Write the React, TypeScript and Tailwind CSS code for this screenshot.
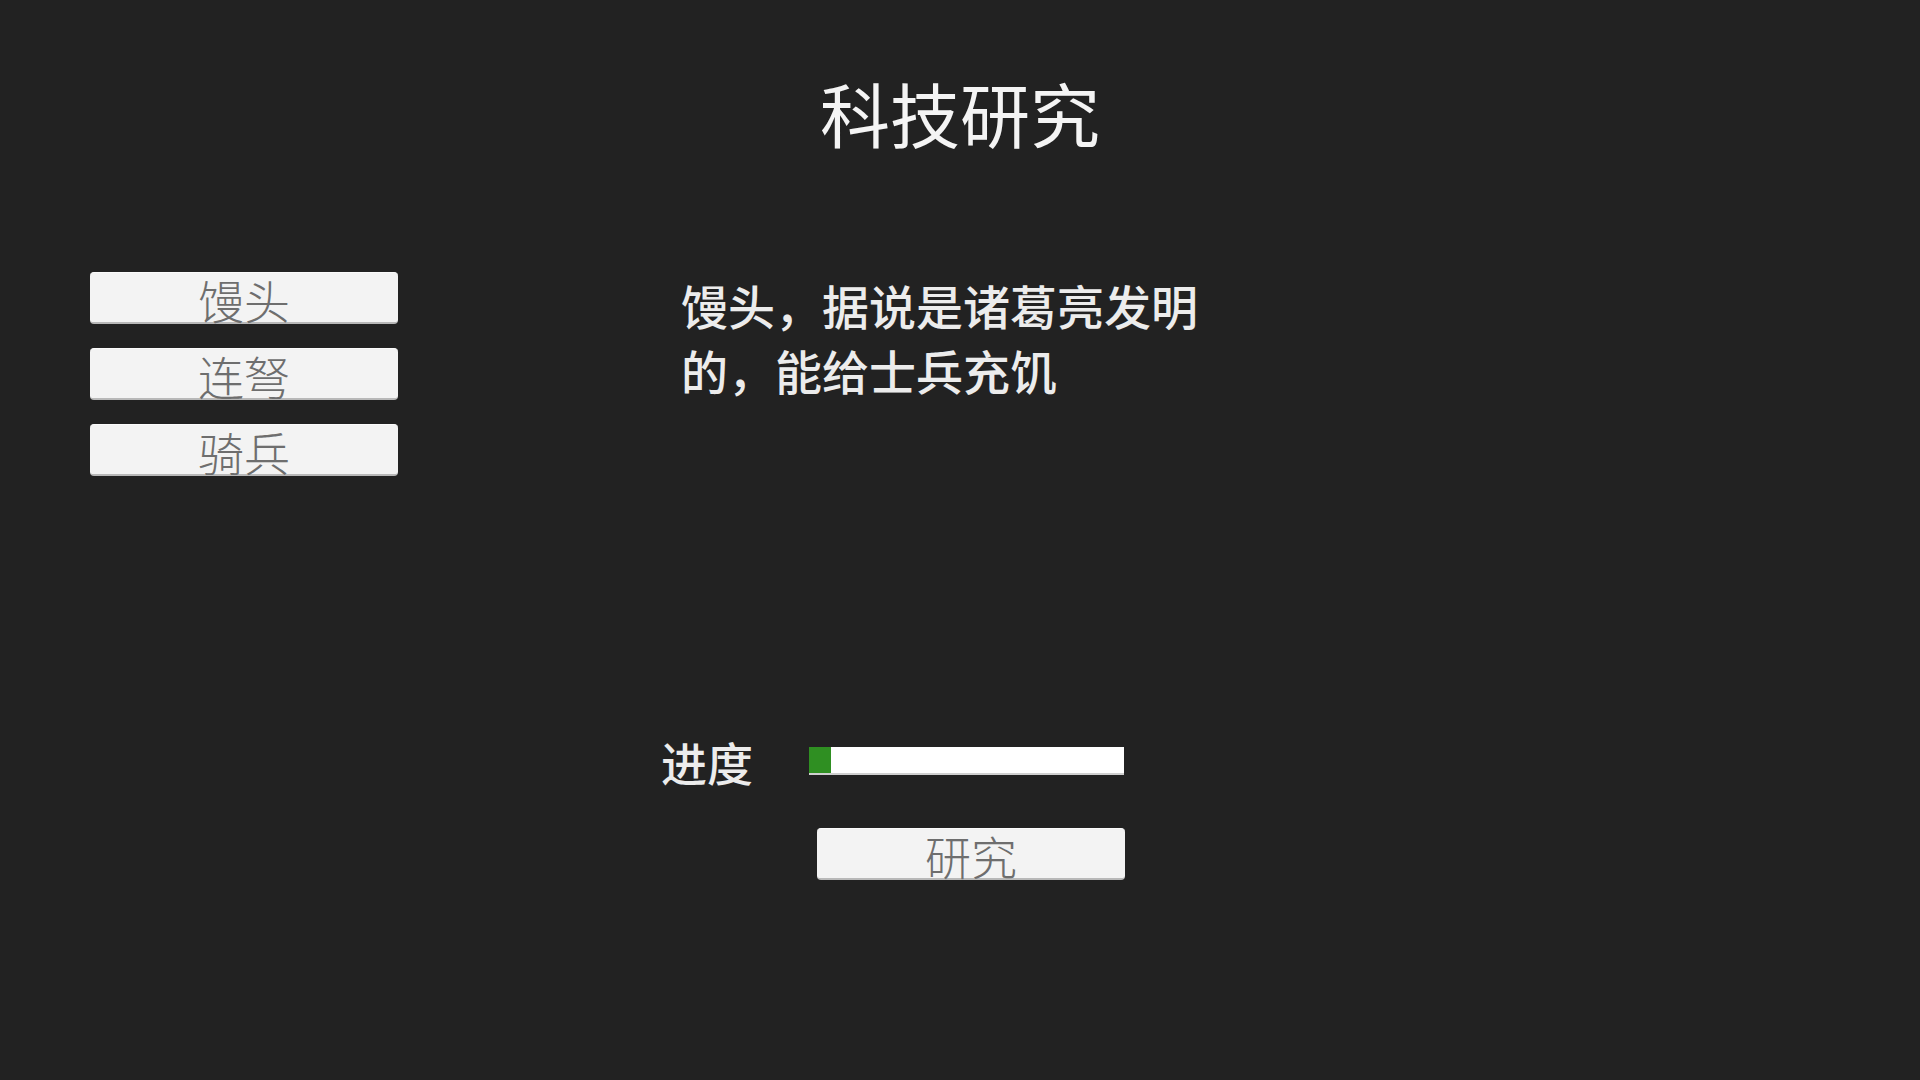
import React, { useState } from 'react';

const TECHS = [
  { id: 'mantou', name: '馒头', desc: '馒头，据说是诸葛亮发明的，能给士兵充饥' },
  { id: 'liannu', name: '连弩', desc: '连弩，据说是诸葛亮发明的，可以连续发射弩箭' },
  { id: 'qibing', name: '骑兵', desc: '骑兵，机动性强，适合突袭敌军' },
];

const FONT = "font-['Noto_Sans_CJK_SC','Noto_Sans',sans-serif]";

const GrayButton: React.FC<{ label: string; onClick?: () => void; className?: string }> = ({ label, onClick, className }) => (
  <button
    onClick={onClick}
    className={`h-[52px] rounded-[4px] bg-[#f3f3f3] border-t border-t-[#fbfbfb] border-b-2 border-b-[#b8b8b8] text-[46px] leading-[44px] pt-[4px] font-light text-[#6e6e6e] flex justify-center ${className ?? ''}`}
  >
    {label}
  </button>
);

export default function App() {
  const [selected, setSelected] = useState('mantou');
  const [progress] = useState(7);
  const tech = TECHS.find(t => t.id === selected) || TECHS[0];

  return (
    <div className={`w-full h-screen bg-[#222222] overflow-hidden ${FONT}`}>
      <h1 className="pt-[78px] text-center text-[70px] leading-[70px] text-[#f4f4f4] font-normal">科技研究</h1>

      <div className="flex mt-[124px]">
        <div className="ml-[90px] w-[308px] flex flex-col gap-[24px]">
          {TECHS.map(t => (
            <GrayButton key={t.id} label={t.name} onClick={() => setSelected(t.id)} className="w-full" />
          ))}
        </div>

        <div className="ml-[263px] flex flex-col">
          <p className="ml-[20px] w-[540px] text-[47px] leading-[65px] text-[#ececec] font-medium">{tech.desc}</p>

          <div className="mt-[334px] flex items-center h-[50px]">
            <span className="w-[148px] text-[46px] leading-[50px] text-[#ececec] font-medium">进度</span>
            <div className="w-[315px] h-[28px] bg-white border-b-2 border-b-[#cfcfcf] flex">
              <div className="h-full bg-[#2f8f22]" style={{ width: `${progress}%` }} />
            </div>
          </div>

          <GrayButton label="研究" className="mt-[42px] ml-[156px] w-[308px]" />
        </div>
      </div>
    </div>
  );
}
